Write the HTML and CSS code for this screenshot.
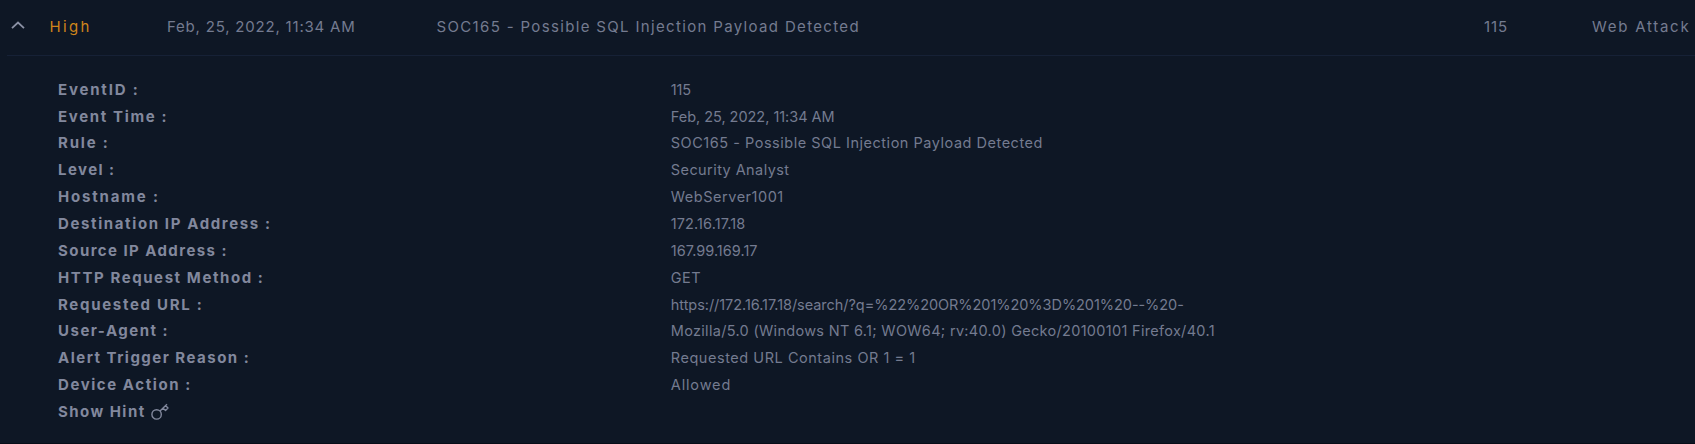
FILE: index.html
```html
<!DOCTYPE html>
<html lang="en">
<head>
<meta charset="utf-8">
<title>Alert details</title>
<link rel="stylesheet" href="styles.css">
</head>
<body>
<main class="alert">
  <header class="summary">
    <svg class="chevron" viewBox="0 0 14 9" fill="none" stroke="currentColor" stroke-width="1.8"><path d="M1 7.2 7 1.6l6 5.6"/></svg>
    <span class="severity">High</span>
    <span class="date">Feb, 25, 2022, 11:34 AM</span>
    <span class="title">SOC165 - Possible SQL Injection Payload Detected</span>
    <span class="number">115</span>
    <span class="type">Web Attack</span>
  </header>
  <dl class="details">
    <dt class="k-id">EventID :</dt><dd class="v-id">115</dd>
    <dt class="k-time">Event Time :</dt><dd class="v-time">Feb, 25, 2022, 11:34 AM</dd>
    <dt class="k-rule">Rule :</dt><dd class="v-rule">SOC165 - Possible SQL Injection Payload Detected</dd>
    <dt class="k-level">Level :</dt><dd class="v-level">Security Analyst</dd>
    <dt class="k-host">Hostname :</dt><dd class="v-host">WebServer1001</dd>
    <dt class="k-dest">Destination IP Address :</dt><dd class="v-dest">172.16.17.18</dd>
    <dt class="k-source">Source IP Address :</dt><dd class="v-source">167.99.169.17</dd>
    <dt class="k-method">HTTP Request Method :</dt><dd class="v-method">GET</dd>
    <dt class="k-url">Requested URL :</dt><dd class="v-url">https://172.16.17.18/search/?q=%22%20OR%201%20%3D%201%20--%20-</dd>
    <dt class="k-agent">User-Agent :</dt><dd class="v-agent">Mozilla/5.0 (Windows NT 6.1; WOW64; rv:40.0) Gecko/20100101 Firefox/40.1</dd>
    <dt class="k-reason">Alert Trigger Reason :</dt><dd class="v-reason">Requested URL Contains OR 1 = 1</dd>
    <dt class="k-action">Device Action :</dt><dd class="v-action">Allowed</dd>
  </dl>
  <div class="hint">
    <span class="hint-text">Show Hint</span>
    <svg class="key" viewBox="0 0 18 18" fill="none" stroke="currentColor" stroke-width="1.4" stroke-linejoin="round"><circle cx="5.6" cy="11.4" r="4.7"/><path d="m9 8.1 7-6.8M12 5.1l2.5 2.4 2.5-2.4-2.5-2.5"/></svg>
  </div>
</main>
</body>
</html>
```

FILE: styles.css
```css
* { box-sizing: border-box; }

body {
  margin: 0;
  background: #0e1725;
  color: #747b90;
  font: 14.5px/26.85px "Inter", sans-serif;
}

.alert {
  height: 444px;
  overflow: hidden;
  border-bottom: 1px solid #070d18;
}

/* Summary row */
.summary {
  display: grid;
  grid-template-columns: 38.5px 117.5px 269.5px 1047.5px 108px 1fr;
  align-items: center;
  height: 56px;
  margin-left: 7px;
  padding: 0 0 1px 4px;
  border-bottom: 1px solid #162136;
  font-size: 15px;
  white-space: nowrap;
}

.chevron { width: 14px; height: 9px; margin-bottom: 3px; color: #8b91a5; }
.severity { color: #d0851b; letter-spacing: 2.3px; }
.date { letter-spacing: .8px; }
.title { letter-spacing: 1.34px; }
.number { letter-spacing: .85px; }
.type { letter-spacing: 1.74px; }

/* Event fields */
.details {
  display: grid;
  grid-template-columns: 612.8px 1fr;
  margin: 0;
  padding: 20.8px 0 0 58px;
  white-space: nowrap;
}

.details dt { color: #82889d; font-size: 15px; font-weight: 700; }
.details dd { margin: 0; }

/* Tracking per field */
.k-id { letter-spacing: 1.8px; }
.k-time { letter-spacing: 1.65px; }
.k-rule { letter-spacing: 1.8px; }
.k-level { letter-spacing: 1.45px; }
.k-host { letter-spacing: 1.82px; }
.k-dest { letter-spacing: 1.62px; }
.k-source { letter-spacing: 1.43px; }
.k-method { letter-spacing: 1.58px; }
.k-url { letter-spacing: 1.7px; }
.k-agent { letter-spacing: 1.5px; }
.k-reason { letter-spacing: 1.48px; }
.k-action { letter-spacing: 1.57px; }

.v-id { letter-spacing: -.148px; }
.v-time { letter-spacing: -.03px; }
.v-rule { letter-spacing: .52px; }
.v-level { letter-spacing: .422px; }
.v-host { letter-spacing: .52px; }
.v-dest { letter-spacing: .108px; }
.v-source { letter-spacing: .022px; }
.v-method { letter-spacing: .483px; }
.v-url { letter-spacing: -.05px; }
.v-agent { letter-spacing: .305px; }
.v-reason { letter-spacing: .54px; }
.v-action { letter-spacing: .85px; }

/* Hint */
.hint {
  display: flex;
  align-items: center;
  gap: 5.5px;
  padding-left: 58px;
  color: #82889d;
  font-size: 15px;
  font-weight: 700;
}

.hint-text { letter-spacing: 1.45px; }
.key { width: 18px; height: 18px; }
```
